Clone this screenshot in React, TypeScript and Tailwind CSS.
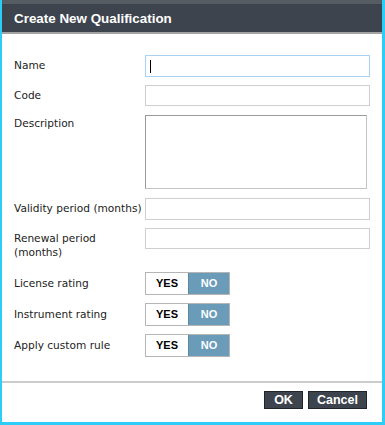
const rows = ['License rating', 'Instrument rating', 'Apply custom rule']

function Toggle() {
  return (
    <div
      className="flex h-[23px] w-[85px] border border-[#b5b5b5]"
      style={{ fontFamily: '"Liberation Sans", Arial, sans-serif' }}
    >
      <div className="flex w-[42px] items-center justify-center bg-white text-[11px] font-bold text-black">YES</div>
      <div className="flex flex-1 items-center justify-center border-l border-[#5b87a0] bg-[#6a9cba] text-[11px] font-bold text-white">NO</div>
    </div>
  )
}

export default function App() {
  return (
    <div
      className="flex h-[425px] w-[385px] flex-col border-r-[3px] border-b-[3px] border-l-2 border-[#2ccdf6] bg-white text-[10.6px] text-[#222]"
      style={{ fontFamily: '"DejaVu Sans", sans-serif' }}
    >
      <div
        className="flex h-[34px] shrink-0 items-center border-t-4 border-b-2 border-t-[#555c64] border-b-[#a3a3a3] bg-[#3d444e] pt-[2px] pl-3 text-[13.4px] font-bold text-white"
        style={{ fontFamily: '"Liberation Sans", Arial, sans-serif' }}
      >
        Create New Qualification
      </div>

      <div className="flex flex-1 flex-col pt-[21px] pl-3">
        <div className="flex items-center">
          <div className="w-[131px]">Name</div>
          <div className="flex h-[22px] w-[225px] items-center border border-[#a9d1f2] pl-[4px]">
            <div className="h-[13px] w-px bg-black" />
          </div>
        </div>

        <div className="mt-[8px] flex items-center">
          <div className="w-[131px]">Code</div>
          <div className="h-[21px] w-[225px] border border-[#cfcfcf]" />
        </div>

        <div className="mt-[9px] flex items-start">
          <div className="w-[131px] pt-[1px]">Description</div>
          <div className="h-[74px] w-[222px] border border-[#9a9a9a] border-r-[#c4c4c4] border-b-[#c4c4c4]" />
        </div>

        <div className="mt-[9px] flex items-center">
          <div className="w-[131px] whitespace-nowrap">Validity period (months)</div>
          <div className="h-[22px] w-[225px] border border-[#cfcfcf]" />
        </div>

        <div className="mt-[8px] flex items-start">
          <div className="w-[131px] pt-[3px] leading-[14px]">
            Renewal period
            <br />
            (months)
          </div>
          <div className="h-[21px] w-[225px] border border-[#cfcfcf]" />
        </div>

        <div className="mt-[13px] flex flex-col gap-[8px]">
          {rows.map((r) => (
            <div key={r} className="flex items-center">
              <div className="w-[131px]">{r}</div>
              <Toggle />
            </div>
          ))}
        </div>
      </div>

      <div
        className="flex h-[41px] shrink-0 items-start justify-end gap-[5px] border-t-2 border-[#cccccc] pt-[8px] pr-[15px]"
        style={{ fontFamily: '"Liberation Sans", Arial, sans-serif' }}
      >
        <button className="h-[18px] w-[39px] border border-[#1f242a] bg-[#3d444e] text-[12.5px] font-bold leading-none text-white">OK</button>
        <button className="h-[18px] w-[59px] border border-[#1f242a] bg-[#3d444e] text-[12.5px] font-bold leading-none text-white">Cancel</button>
      </div>
    </div>
  )
}
